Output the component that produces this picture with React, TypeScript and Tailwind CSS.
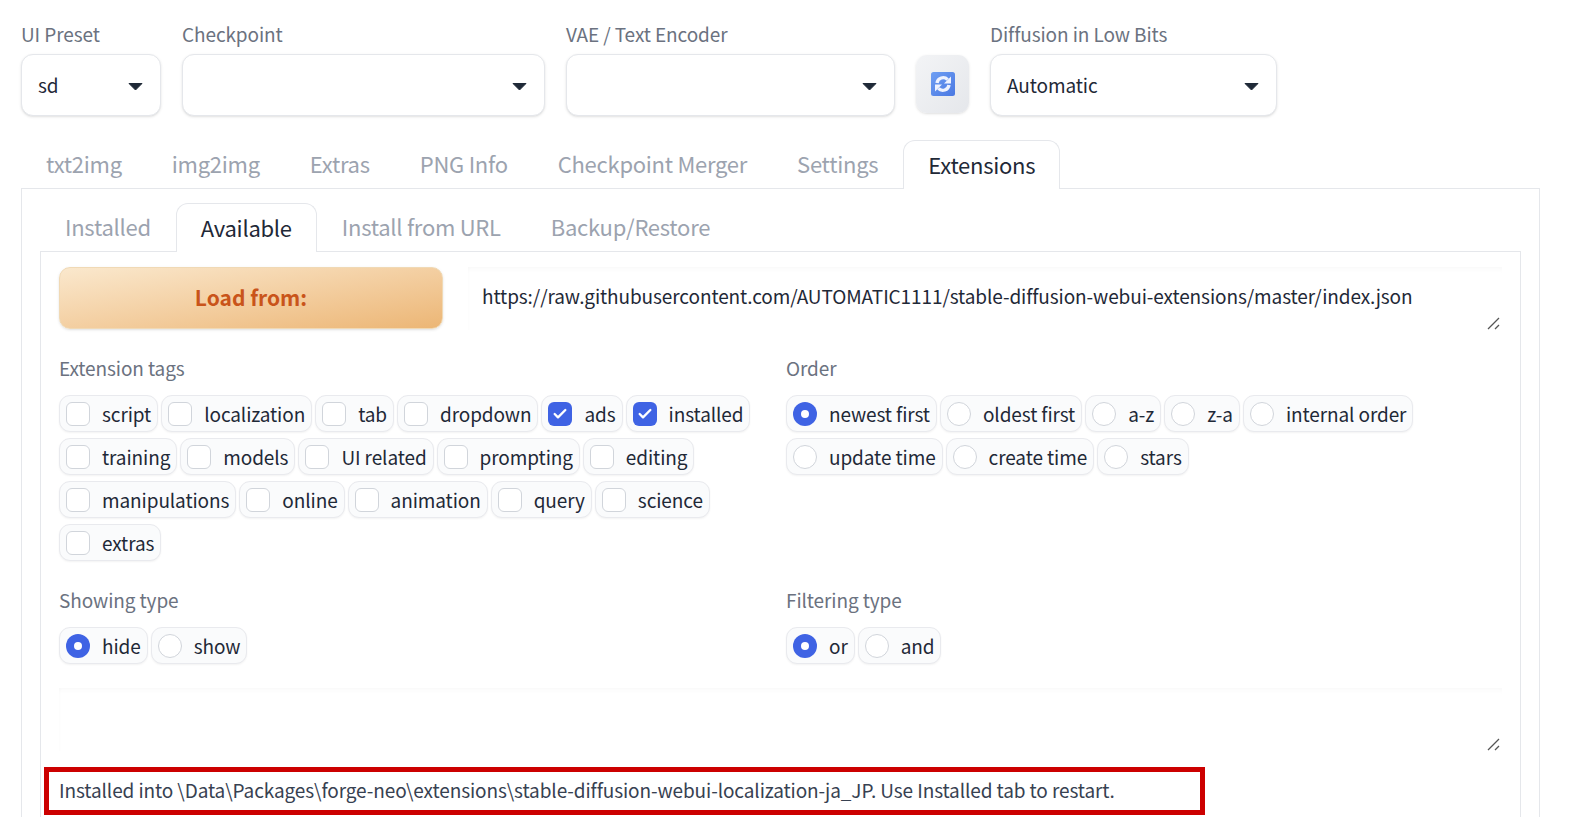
import { Check } from 'lucide-react'

const sans = 'font-["Noto_Sans_CJK_JP","Noto_Sans",sans-serif]'

function Caret() {
  return (
    <svg width="15" height="9" viewBox="0 0 15 9" className="shrink-0 mt-[2px]">
      <path d="M1 1.5 L14 1.5 L7.5 8 Z" fill="#1f2937" stroke="#1f2937" strokeLinejoin="round" />
    </svg>
  )
}

function Dropdown({ label, value, width }: { label: string; value?: string; width: string }) {
  return (
    <div className={width}>
      <div className="text-[19px] tracking-[-0.1px] leading-[28px] text-[#6b7280] mb-[6px]">{label}</div>
      <div className="h-[62px] bg-white border border-[#e5e7eb] rounded-[12px] shadow-sm flex items-center justify-between pl-[16px] pr-[17px] text-[19px] tracking-[-0.1px] text-[#1f2937]">
        <span>{value}</span>
        <Caret />
      </div>
    </div>
  )
}

function RefreshIcon() {
  return (
    <svg width="24" height="24" viewBox="0 0 24 24">
      <defs>
        <linearGradient id="blue" x1="0" y1="0" x2="1" y2="1">
          <stop offset="0" stopColor="#6f9ff3" />
          <stop offset="1" stopColor="#4a78e2" />
        </linearGradient>
      </defs>
      <rect width="24" height="24" rx="2.5" fill="url(#blue)" />
      <path d="M6 11 A6.2 6.2 0 0 1 16.6 7.6" fill="none" stroke="#eef2fe" strokeWidth="3.4" />
      <path d="M20 4.5 L20 11.5 L13 11.5 Z" fill="#eef2fe" />
      <path d="M18 13 A6.2 6.2 0 0 1 7.4 16.4" fill="none" stroke="#eef2fe" strokeWidth="3.4" />
      <path d="M4 19.5 L4 12.5 L11 12.5 Z" fill="#eef2fe" />
    </svg>
  )
}

function Chip({ label, checked, radio }: { label: string; checked?: boolean; radio?: boolean }) {
  return (
    <div className="h-[37px] flex items-center gap-[12px] px-[6px] bg-[#fafbfc] border border-[#e9eaee] rounded-[11px] shadow-xs text-[19px] tracking-[-0.1px] text-[#1f2937]">
      {radio ? (
        <span
          className={
            checked
              ? 'w-[24px] h-[24px] rounded-full bg-[#3f63e4] flex items-center justify-center'
              : 'w-[24px] h-[24px] rounded-full bg-white border border-[#d1d5db]'
          }
        >
          {checked && <span className="w-[8px] h-[8px] rounded-full bg-white" />}
        </span>
      ) : (
        <span
          className={
            checked
              ? 'w-[24px] h-[24px] rounded-[6px] bg-[#3f63e4] flex items-center justify-center'
              : 'w-[24px] h-[24px] rounded-[6px] bg-white border border-[#d1d5db]'
          }
        >
          {checked && <Check size={16} color="white" strokeWidth={3.5} />}
        </span>
      )}
      <span className="leading-none">{label}</span>
    </div>
  )
}

function ChipGroup({ label, items, radio }: { label: string; items: { t: string; on?: boolean }[]; radio?: boolean }) {
  return (
    <div>
      <div className="text-[19px] tracking-[-0.1px] leading-[28px] text-[#6b7280] mb-[13px]">{label}</div>
      <div className="flex flex-wrap gap-x-[3px] gap-y-[6px]">
        {items.map((i) => (
          <Chip key={i.t} label={i.t} checked={i.on} radio={radio} />
        ))}
      </div>
    </div>
  )
}

function TextBox({ value }: { value?: string }) {
  return (
    <div className="flex-1 h-[63px] relative bg-white shadow-[inset_0_6px_6px_-5px_rgba(0,0,0,0.035),inset_3px_0_3px_-3px_rgba(0,0,0,0.03)] pl-[14px] pt-[15px] text-[19px] tracking-[-0.1px] leading-[28px] text-[#1f2937]">
      {value}
      <svg width="14" height="14" viewBox="0 0 14 14" className="absolute right-[1px] -bottom-[1px]">
        <path d="M1 12 L12 1 M8 12 L12 8" stroke="#555" strokeWidth="1.3" fill="none" />
      </svg>
    </div>
  )
}

const tags = [
  { t: 'script' },
  { t: 'localization' },
  { t: 'tab' },
  { t: 'dropdown' },
  { t: 'ads', on: true },
  { t: 'installed', on: true },
  { t: 'training' },
  { t: 'models' },
  { t: 'UI related' },
  { t: 'prompting' },
  { t: 'editing' },
  { t: 'manipulations' },
  { t: 'online' },
  { t: 'animation' },
  { t: 'query' },
  { t: 'science' },
  { t: 'extras' },
]

const order = [
  { t: 'newest first', on: true },
  { t: 'oldest first' },
  { t: 'a-z' },
  { t: 'z-a' },
  { t: 'internal order' },
  { t: 'update time' },
  { t: 'create time' },
  { t: 'stars' },
]

export default function App() {
  return (
    <div className={`${sans} h-[817px] overflow-hidden bg-white pl-[21px] pr-[40px] pt-[20px]`}>
      {/* Top selects */}
      <div className="flex items-end gap-[21px]">
        <Dropdown label="UI Preset" value="sd" width="w-[140px]" />
        <Dropdown label="Checkpoint" width="w-[363px]" />
        <Dropdown label="VAE / Text Encoder" width="w-[329px]" />
        <div className="w-[53px] h-[58px] mb-[3px] rounded-[11px] bg-gradient-to-br from-[#f3f4f6] to-[#e5e7eb] shadow-sm flex items-center justify-center">
          <RefreshIcon />
        </div>
        <Dropdown label="Diffusion in Low Bits" value="Automatic" width="w-[287px]" />
      </div>

      {/* Main tabs */}
      <div className="flex mt-[24px] h-[48px] text-[22px] tracking-[-0.26px] text-[#9ca3af]">
        {['txt2img', 'img2img', 'Extras', 'PNG Info', 'Checkpoint Merger', 'Settings'].map((t) => (
          <div key={t} className="px-[25px] pb-[1px] flex items-center">
            {t}
          </div>
        ))}
        <div className="relative z-10 h-[49px] px-[24px] pb-[1px] flex items-center bg-white border border-b-0 border-[#e5e7eb] rounded-t-[12px] text-[#1f2937]">
          Extensions
        </div>
      </div>

      <div className="border border-[#e5e7eb] h-[700px] px-[18px] pt-[14px]">
        {/* Sub tabs */}
        <div className="flex h-[48px] text-[22px] tracking-[-0.26px] text-[#9ca3af]">
          <div className="px-[25px] pb-[1px] flex items-center">Installed</div>
          <div className="relative z-10 h-[49px] px-[24px] pb-[1px] flex items-center bg-white border border-b-0 border-[#e5e7eb] rounded-t-[12px] text-[#1f2937]">
            Available
          </div>
          <div className="px-[25px] pb-[1px] flex items-center">Install from URL</div>
          <div className="px-[25px] pb-[1px] flex items-center">Backup/Restore</div>
        </div>

        <div className="border border-[#e5e7eb] h-[600px] px-[18px] pt-[15px]">
          <div className="flex gap-[25px]">
            <div className="w-[384px] h-[62px] rounded-[11px] border border-[#f0d9b5] shadow-sm bg-gradient-to-br from-[#fae8cd] to-[#ecb675] flex items-center justify-center text-[21px] font-semibold text-[#c9541a]">
              Load from:
            </div>
            <TextBox value="https://raw.githubusercontent.com/AUTOMATIC1111/stable-diffusion-webui-extensions/master/index.json" />
          </div>

          <div className="grid grid-cols-[706px_1fr] gap-x-[21px] mt-[24px]">
            <ChipGroup label="Extension tags" items={tags} />
            <ChipGroup label="Order" items={order} radio />
          </div>

          <div className="grid grid-cols-[706px_1fr] gap-x-[21px] mt-[25px]">
            <ChipGroup label="Showing type" items={[{ t: 'hide', on: true }, { t: 'show' }]} radio />
            <ChipGroup label="Filtering type" items={[{ t: 'or', on: true }, { t: 'and' }]} radio />
          </div>

          <div className="flex mt-[24px]">
            <TextBox />
          </div>

          {/* Result line with red marker */}
          <div className="-ml-[15px] mt-[16px] w-[1161px] h-[48px] border-[5px] border-[#cc0000] pl-[10px] pb-[1px] flex items-center text-[19px] tracking-[-0.1px] text-[#374151]">
            Installed into \Data\Packages\forge-neo\extensions\stable-diffusion-webui-localization-ja_JP. Use Installed tab to restart.
          </div>
        </div>
      </div>
    </div>
  )
}
